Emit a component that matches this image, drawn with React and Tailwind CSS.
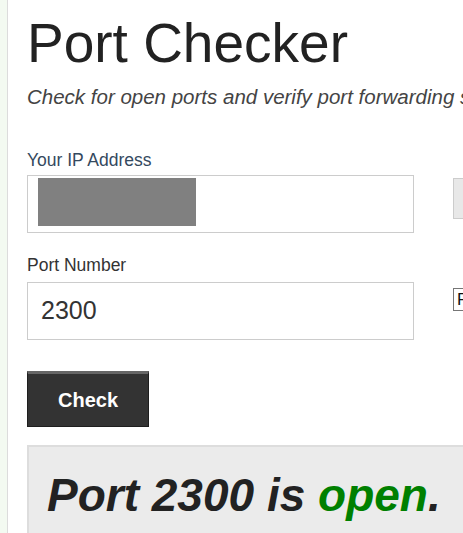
import React from 'react';

const App = () => {
    return (
        <div className="flex min-h-[533px] w-[463px] overflow-hidden bg-white font-['Liberation_Sans',Arial,sans-serif]">
            {/* Left gutter strip */}
            <div className="w-[8px] shrink-0 border-r border-[#dcdcdc] bg-[#f3faf1]" />

            <div className="w-[640px] shrink-0 pl-[19px]">
                <h1 className="mt-[10px] text-[55px] leading-[66px] text-[#222]">Port Checker</h1>
                <p className="mt-[10px] whitespace-nowrap text-[20.5px] italic leading-[22px] text-[#444]">
                    Check for open ports and verify port forwarding setup on your router.
                </p>

                <div className="mt-[42px] flex">
                    <div className="w-[387px] shrink-0">
                        <label className="block text-[17.5px] leading-[20px] text-[#34495e]">Your IP Address</label>
                        <div className="mt-[5px] flex h-[58px] items-start border border-[#ccc] px-[10px] pt-[2px]">
                            <div className="h-[48px] w-[158px] bg-[#808080]" />
                        </div>

                        <label className="mt-[22px] block text-[17.5px] leading-[20px] text-[#333]">Port Number</label>
                        <div className="mt-[7px] flex h-[58px] items-center border border-[#ccc] px-[13px]">
                            <span className="text-[25px] text-[#333]">2300</span>
                        </div>
                    </div>

                    <div className="ml-[39px] flex flex-col">
                        <div className="mt-[28px] h-[41px] w-[120px] border border-[#ccc] bg-[#e8e8e8]" />
                        <div className="mt-[69px] flex h-[23px] w-[120px] items-center border border-[#767676] px-[3px] text-[17px] text-[#111]">
                            Forward
                        </div>
                    </div>
                </div>

                <button className="mt-[31px] h-[56px] w-[122px] border border-[#1e1e1e] border-t-[3px] border-t-[#666] bg-[#333] text-[20px] font-bold text-white">
                    Check
                </button>

                <div className="mt-[18px] h-[120px] w-[600px] border-2 border-[#ddd] bg-[#ebebeb] pl-[18px] pt-[24px]">
                    <p className="text-[46px] font-bold italic leading-[48px] text-[#222]">
                        Port 2300 is <span className="text-[#008000]">open</span>.
                    </p>
                </div>
            </div>
        </div>
    );
};

export default App;
